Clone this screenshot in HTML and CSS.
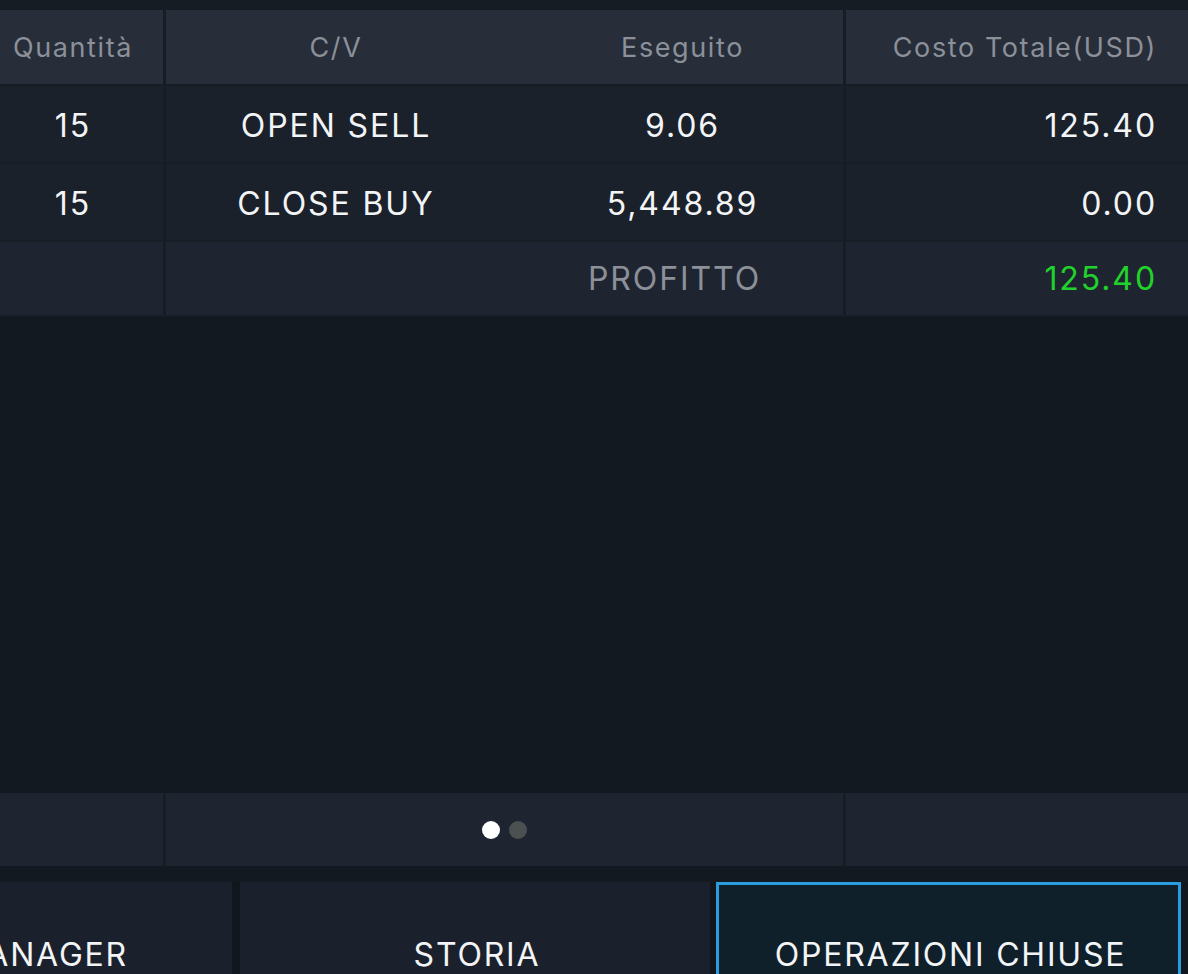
FILE: index.html
```html
<!DOCTYPE html>
<html lang="it">
<head>
<meta charset="utf-8">
<title>Operazioni chiuse</title>
<link rel="stylesheet" href="styles.css">
</head>
<body>
<div class="screen">
  <div class="top-strip"></div>
  <div class="table">
    <div class="cell head c1">Quantità</div>
    <div class="cell head c2"><span class="sa">C/V</span><span class="sb">Eseguito</span></div>
    <div class="cell head c3">Costo Totale(USD)</div>

    <div class="cell data c1">15</div>
    <div class="cell data c2"><span class="sa">OPEN SELL</span><span class="sb">9.06</span></div>
    <div class="cell data c3">125.40</div>

    <div class="cell data c1">15</div>
    <div class="cell data c2"><span class="sa">CLOSE BUY</span><span class="sb">5,448.89</span></div>
    <div class="cell data c3">0.00</div>

    <div class="cell sum c1"></div>
    <div class="cell sum c2"><span class="sa"></span><span class="sb label">PROFITTO</span></div>
    <div class="cell sum c3 profit">125.40</div>
  </div>

  <div class="empty"></div>

  <div class="table pager-row">
    <div class="cell foot c1"></div>
    <div class="cell foot c2"><span class="dots"><span class="dot on"></span><span class="dot"></span></span></div>
    <div class="cell foot c3"></div>
  </div>

  <div class="tabs">
    <div class="tab tab-first"><span>MANAGER</span></div>
    <div class="tab tab-mid"><span>STORIA</span></div>
    <div class="tab tab-active"><span>OPERAZIONI CHIUSE</span></div>
  </div>
</div>
</body>
</html>
```
FILE: styles.css
```css
html, body {
  margin: 0;
  padding: 0;
  background: #131920;
}
body {
  font-family: "Inter", "Liberation Sans", sans-serif;
  color: #f2f4f6;
  width: 1188px;
  height: 974px;
  overflow: hidden;
}
.screen {
  display: flex;
  flex-direction: column;
  height: 974px;
}
.top-strip {
  height: 10px;
  background: #161c24;
}
.table {
  display: grid;
  grid-template-columns: 163px 677px 1fr;
  column-gap: 3px;
  row-gap: 2px;
  background: #171c25;
  padding-bottom: 2px;
}
.cell {
  display: flex;
  align-items: center;
  white-space: nowrap;
}
.c1 {
  justify-content: center;
  padding-right: 17px;
}
.c2 .sa {
  width: 340px;
  text-align: center;
}
.c2 .sb {
  width: 321px;
  padding-left: 16px;
  text-align: center;
}
.c3 {
  justify-content: flex-end;
  padding-right: 31px;
}
.head {
  height: 74px;
  background: #272e3a;
  color: #8b9099;
  font-size: 27px;
  letter-spacing: 1.6px;
}
.data {
  height: 76px;
  padding-top: 2px;
  box-sizing: border-box;
  background: #1b212b;
  font-size: 32px;
  letter-spacing: 1.9px;
}
.sum {
  height: 73px;
  background: #1f2530;
  font-size: 32px;
  letter-spacing: 1.9px;
}
.sum .label {
  color: #8b9099;
  padding-left: 0;
  padding-right: 0;
  width: 337px;
}
.profit {
  color: #20d22b;
}
.empty {
  height: 476px;
  background: #131920;
}
.pager-row {
  padding-bottom: 0;
}
.foot {
  height: 73px;
  background: #1f2530;
}
.foot.c2 {
  justify-content: flex-start;
}
.dots {
  display: flex;
  gap: 9px;
  margin-left: 316px;
}
.dot {
  width: 18px;
  height: 18px;
  border-radius: 50%;
  background: #4b5050;
}
.dot.on {
  background: #ffffff;
}
.tabs {
  display: flex;
  margin-top: 16px;
  height: 92px;
  background: #12171e;
}
.tab {
  display: flex;
  align-items: flex-start;
  justify-content: center;
  background: #1b212c;
  font-size: 32px;
  line-height: 32px;
  letter-spacing: 1.8px;
  white-space: nowrap;
  padding-top: 57px;
  box-sizing: border-box;
  overflow: hidden;
}
.tab-first {
  width: 232px;
  justify-content: flex-end;
  padding-right: 104px;
}
.tab-mid {
  width: 470px;
  margin-left: 8px;
  padding-left: 4px;
}
.tab-active {
  width: 465px;
  margin-left: 6px;
  background: #10202b;
  border: 3px solid #2b9be0;
  border-bottom: none;
  padding-top: 54px;
  padding-left: 4px;
}
```
